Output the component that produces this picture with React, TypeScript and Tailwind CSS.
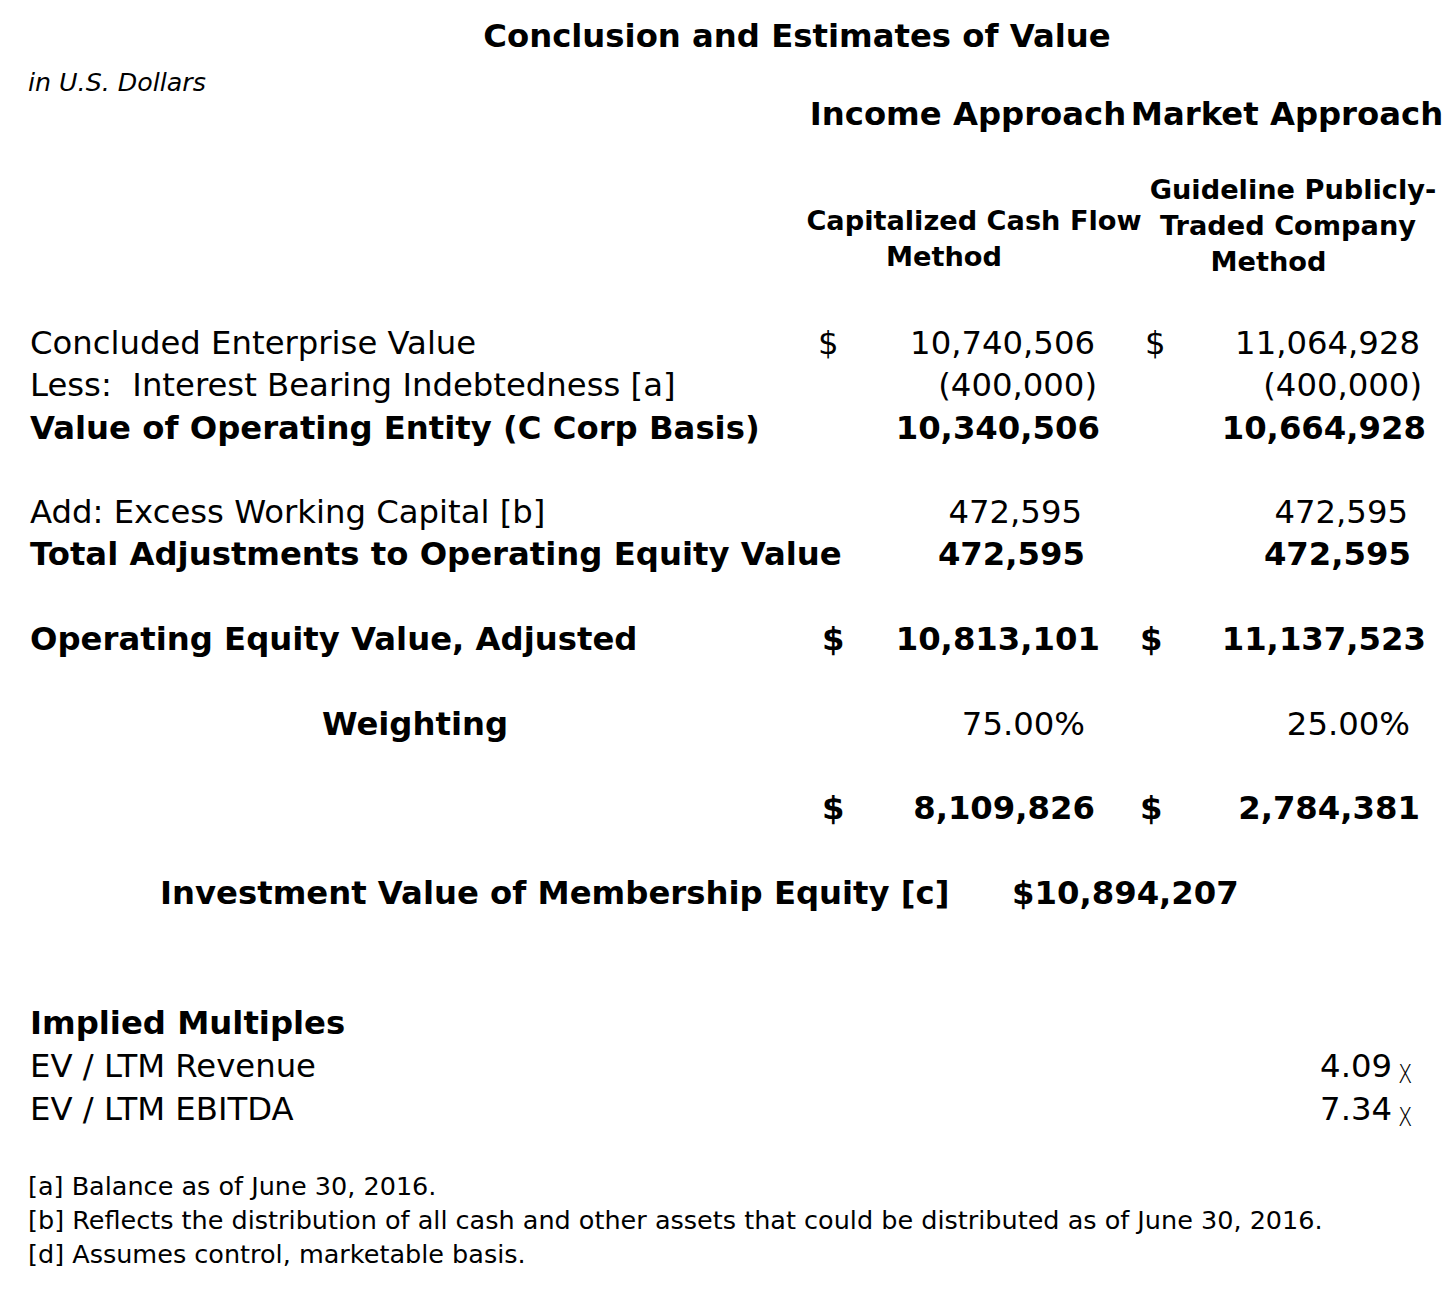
import React from "react";

type Row = {
  label?: string;
  bold?: boolean;
  numBold?: boolean;
  center?: boolean;
  d1?: boolean;
  v1?: string;
  p1?: string;
  d2?: boolean;
  v2?: string;
  p2?: string;
};

const rows: Row[] = [
  { label: "Concluded Enterprise Value", d1: true, v1: "10,740,506", p1: "pr-[5px]", d2: true, v2: "11,064,928", p2: "pr-[6px]" },
  { label: "Less:  Interest Bearing Indebtedness [a]", v1: "(400,000)", p1: "pr-[3px]", v2: "(400,000)", p2: "pr-[4px]" },
  { label: "Value of Operating Entity (C Corp Basis)", bold: true, numBold: true, v1: "10,340,506", p1: "pr-0", v2: "10,664,928", p2: "pr-0" },
  {},
  { label: "Add: Excess Working Capital [b]", v1: "472,595", p1: "pr-[18px]", v2: "472,595", p2: "pr-[18px]" },
  { label: "Total Adjustments to Operating Equity Value", bold: true, numBold: true, v1: "472,595", p1: "pr-[15px]", v2: "472,595", p2: "pr-[15px]" },
  {},
  { label: "Operating Equity Value, Adjusted", bold: true, numBold: true, d1: true, v1: "10,813,101", p1: "pr-0", d2: true, v2: "11,137,523", p2: "pr-0" },
  {},
  { label: "Weighting", bold: true, center: true, v1: "75.00%", p1: "pr-[15px]", v2: "25.00%", p2: "pr-[16px]" },
  {},
  { numBold: true, d1: true, v1: "8,109,826", p1: "pr-[5px]", d2: true, v2: "2,784,381", p2: "pr-[6px]" },
  {},
];

function DataRow({ r }: { r: Row }) {
  const nb = r.numBold ? "font-bold" : "";
  return (
    <div className="grid grid-cols-[770px_60px_240px_80px_246px] h-[42.3px] leading-[42.3px] whitespace-pre">
      <div className={`${r.bold ? "font-bold" : ""} ${r.center ? "text-center" : ""}`}>{r.label}</div>
      <div className={`${nb} ${r.numBold ? "pl-[22px]" : "pl-[18px]"}`}>{r.d1 ? "$" : ""}</div>
      <div className={`${nb} text-right ${r.p1 ?? ""}`}>{r.v1}</div>
      <div className={`${nb} ${r.numBold ? "pl-[40px]" : "pl-[45px]"}`}>{r.d2 ? "$" : ""}</div>
      <div className={`${nb} text-right ${r.p2 ?? ""}`}>{r.v2}</div>
    </div>
  );
}

function Multiple({ label, value, h }: { label: string; value: string; h: string }) {
  return (
    <div className={`flex w-[1386px] ${h}`}>
      <div className="flex-1">{label}</div>
      <div>{value}</div>
      <div className="w-[24px] pl-[6px]">
        <span className="inline-block text-[34px] font-light scale-x-[0.72] origin-left translate-y-[5px]">x</span>
      </div>
    </div>
  );
}

export default function App() {
  return (
    <div className="w-[1446px] min-h-[1293px] bg-white text-black font-['DejaVu_Sans',sans-serif]">
      {/* Title */}
      <div className="h-[72px] leading-[72px] pl-[148px] text-center text-[32.3px] font-bold whitespace-nowrap">
        Conclusion and Estimates of Value
      </div>
      <div className="h-[22px] leading-[22px] pl-[28px] text-[25.3px] italic">in U.S. Dollars</div>

      {/* Approach headers */}
      <div className="flex h-[40px] leading-[40px] text-[32.3px] font-bold whitespace-nowrap">
        <div className="ml-[808px] w-[320px] text-center">Income Approach</div>
        <div className="w-[318px] text-center">Market Approach</div>
      </div>

      {/* Method headers */}
      <div className="flex h-[188px] text-[27.2px] font-bold leading-[36px] whitespace-nowrap">
        <div className="ml-[800px] w-[348px] pt-[69px] text-center">
          <div>Capitalized Cash Flow</div>
          <div className="pr-[60px]">Method</div>
        </div>
        <div className="w-[298px] pt-[38px] text-center">
          <div className="pr-[8px]">Guideline Publicly-</div>
          <div className="pr-[18px]">Traded Company</div>
          <div className="pr-[57px]">Method</div>
        </div>
      </div>

      {/* Values table */}
      <div className="pl-[30px] text-[32.3px]">
        {rows.map((r, i) => (
          <DataRow key={i} r={r} />
        ))}
        <div className="grid grid-cols-[982px_auto] h-[43.3px] leading-[43.3px] font-bold whitespace-nowrap">
          <div className="pl-[130px]">Investment Value of Membership Equity [c]</div>
          <div>$10,894,207</div>
        </div>
        <div className="h-[43.3px]" />
        <div className="h-[43.3px]" />

        {/* Implied multiples */}
        <div className="h-[44px] leading-[43.3px] font-bold">Implied Multiples</div>
        <Multiple label="EV / LTM Revenue" value="4.09" h="h-[42px] leading-[40px]" />
        <Multiple label="EV / LTM EBITDA" value="7.34" h="h-[42px] leading-[42px]" />
      </div>

      {/* Footnotes */}
      <div className="mt-[39px] pl-[28px] text-[25.5px] leading-[34px] whitespace-nowrap">
        <div>[a] Balance as of June 30, 2016.</div>
        <div>[b] Reflects the distribution of all cash and other assets that could be distributed as of June 30, 2016.</div>
        <div>[d] Assumes control, marketable basis.</div>
      </div>
    </div>
  );
}
